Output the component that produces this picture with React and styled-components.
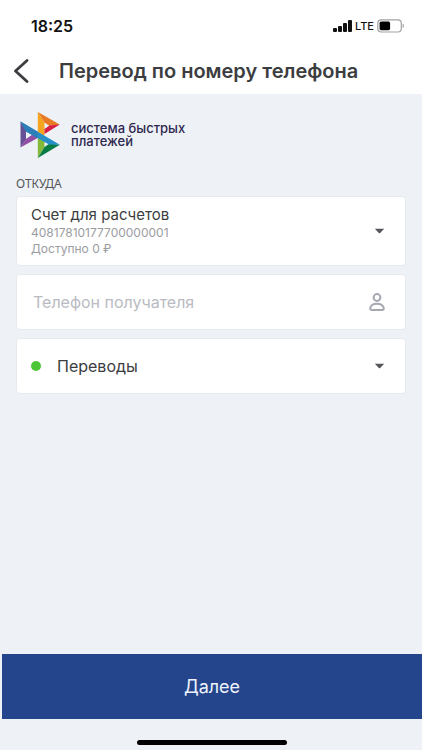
import React, { useState } from 'react'
import styled, { createGlobalStyle } from 'styled-components'

const GlobalStyle = createGlobalStyle`
  * {
    box-sizing: border-box;
  }

  body {
    margin: 0;
    background: #eef2f6;
    font-family: Inter, 'Liberation Sans', sans-serif;
    color: #3c3d40;
  }

  button,
  input,
  select {
    font-family: inherit;
  }
`

const Screen = styled.div`
  min-height: 100vh;
  display: flex;
  flex-direction: column;
`

const StatusBar = styled.div`
  display: flex;
  align-items: center;
  justify-content: space-between;
  height: 48px;
  padding: 4px 17px 0 31px;
  background: #fff;
  color: #111;
`

const Clock = styled.span`
  font-size: 16px;
  font-weight: 600;
`

const StatusIcons = styled.div`
  display: flex;
  align-items: center;
  gap: 3px;
  font-size: 11px;
  font-weight: 500;
`

const Header = styled.header`
  display: flex;
  align-items: center;
  gap: 30px;
  height: 46px;
  padding: 0 13px;
  background: #fff;
`

const BackButton = styled.button`
  display: flex;
  padding: 0;
  border: none;
  background: none;
  color: #3c3d40;
  cursor: pointer;
`

const Title = styled.h1`
  margin: 0;
  font-size: 20px;
  font-weight: 600;
  line-height: 24px;
  white-space: nowrap;
`

const Content = styled.main`
  flex: 1;
  padding: 18px 16px;
`

const Brand = styled.div`
  display: flex;
  align-items: center;
  gap: 10px;
  padding-left: 4px;
  color: #2f2850;
`

const BrandName = styled.p`
  margin: 0;
  font-size: 13px;
  font-weight: 500;
  line-height: 13px;
`

const SectionTitle = styled.h2`
  margin: 18px 0 4px;
  font-family: 'Noto Sans', sans-serif;
  font-size: 12px;
  font-weight: 400;
  line-height: 16px;
  color: #55565a;
`

const Fields = styled.form`
  display: flex;
  flex-direction: column;
  gap: 8px;
`

const Card = styled.label`
  display: flex;
  align-items: center;
  min-height: ${(props) => (props.$tall ? '70px' : '56px')};
  padding: 0 20px 0 ${(props) => (props.$input ? '16px' : '14px')};
  border: 1px solid #e6e9ee;
  border-radius: 4px;
  background: #fff;
`

const CardBody = styled.span`
  flex: 1;
  display: flex;
  flex-direction: column;
`

const Select = styled.select`
  appearance: none;
  flex: 1;
  width: 100%;
  padding: 0;
  border: none;
  outline: none;
  background: none;
  font-size: ${(props) => (props.$compact ? '15px' : '16px')};
  line-height: 20px;
  color: #3c3d40;
`

const Details = styled.span`
  font-size: 12px;
  line-height: 16px;
  color: #9b9c9f;
`

const Input = styled.input`
  flex: 1;
  min-width: 0;
  padding: 0;
  border: none;
  outline: none;
  background: none;
  font-size: 16px;
  line-height: 20px;
  color: #3c3d40;

  &::placeholder {
    color: #b9bbc2;
    opacity: 1;
  }
`

const ContactsButton = styled.button`
  display: flex;
  padding: 0;
  border: none;
  background: none;
  color: #a5a8b1;
  cursor: pointer;
`

const Dot = styled.span`
  width: 10px;
  height: 10px;
  margin-right: 16px;
  border-radius: 50%;
  background: #4cc636;
`

const Footer = styled.footer`
  display: flex;
  flex-direction: column;
  align-items: center;
  padding: 0 0 5px 2px;
`

const NextButton = styled.button`
  width: 100%;
  height: 65px;
  margin-bottom: 21px;
  border: none;
  background: #24458c;
  color: #edf2fc;
  font-size: 18px;
  cursor: pointer;
`

const HomeIndicator = styled.div`
  width: 150px;
  height: 5px;
  border-radius: 3px;
  background: #000;
`

const SignalIcon = () => (
  <svg width="19" height="12" viewBox="0 0 19 12" fill="currentColor">
    <rect x="0" y="8" width="4" height="4" rx="1" />
    <rect x="5" y="6" width="4" height="6" rx="1" />
    <rect x="10" y="3" width="4" height="9" rx="1" />
    <rect x="15" y="0" width="4" height="12" rx="1" />
  </svg>
)

const BatteryIcon = () => (
  <svg width="28" height="14" viewBox="0 0 28 14">
    <rect x="0.8" y="0.8" width="23.5" height="12.2" rx="3.4" fill="none" stroke="#a3a3a3" strokeWidth="1.2" />
    <rect x="2.6" y="2.6" width="10.5" height="8.6" rx="1.6" fill="#000" />
    <path d="M25.7 4.8c1.6.7 1.6 3.5 0 4.2z" fill="#8f8f8f" />
  </svg>
)

const BackIcon = () => (
  <svg width="16" height="24" viewBox="0 0 16 24" fill="none" stroke="currentColor" strokeWidth="2.8">
    <path d="M14 1.5L2.5 12L14 22.5" strokeLinecap="round" strokeLinejoin="round" />
  </svg>
)

const BrandLogo = () => (
  <svg width="41" height="46" viewBox="0 0 40 46">
    <path d="M0 9.5L5.5 18V27.500L0 35.500z" fill="#665196" />
    <path d="M0 35.500L5.500 27L12 22.500L19 25z" fill="#9250a5" />
    <path d="M17.300 0L24 10.500V24L17.300 20z" fill="#f5a51f" />
    <path d="M17.300 0L39.300 12.500L29 14L24 10.500z" fill="#e87925" />
    <path d="M39.300 12.500L24 21.900V17L29 13.500z" fill="#d61f43" />
    <path d="M17.300 24L24 28V35L17.300 46z" fill="#83ba3b" />
    <path d="M39.300 32.800L17.300 46L24 35L29 31.500z" fill="#087c45" />
    <path d="M0 9.500L39.300 32.800L28.500 32.500L5.500 19.500z" fill="#268fc8" />
    <path d="M0 9.500L17.300 19.800V26.200L5.500 19.500z" fill="#2c7fb9" />
  </svg>
)

const Caret = () => (
  <svg width="11" height="6" viewBox="0 0 11 6">
    <path d="M.8.7H10.2L6.2 5Q5.5 5.7 4.8 5z" fill="#55565a" />
  </svg>
)

const PersonIcon = () => (
  <svg width="16" height="20" viewBox="0 0 16 20" fill="none" stroke="currentColor" strokeWidth="2">
    <circle cx="8" cy="5.500" r="3.400" />
    <path d="M3 18h10c1.300 0 1.800-.6 1.800-1.400C14.800 13.700 12 11.800 8 11.800S1.200 13.700 1.200 16.600c0 .8.5 1.400 1.800 1.400z" />
  </svg>
)

const App = () => {
  const [phone, setPhone] = useState('')

  return (
    <>
      <GlobalStyle />
      <Screen>
        <StatusBar>
          <Clock>18:25</Clock>
          <StatusIcons>
            <SignalIcon />
            <span>LTE</span>
            <BatteryIcon />
          </StatusIcons>
        </StatusBar>

        <Header>
          <BackButton type="button" aria-label="Назад">
            <BackIcon />
          </BackButton>
          <Title>Перевод по номеру телефона</Title>
        </Header>

        <Content>
          <Brand>
            <BrandLogo />
            <BrandName>
              система быстрых
              <br />
              платежей
            </BrandName>
          </Brand>

          <SectionTitle>ОТКУДА</SectionTitle>

          <Fields id="transfer" onSubmit={(e) => e.preventDefault()}>
            <Card $tall>
              <CardBody>
                <Select $compact>
                  <option>Счет для расчетов</option>
                </Select>
                <Details>40817810177700000001</Details>
                <Details>Доступно 0 ₽</Details>
              </CardBody>
              <Caret />
            </Card>

            <Card $input>
              <Input
                type="tel"
                aria-label="Телефон получателя"
                placeholder="Телефон получателя"
                value={phone}
                onChange={(e) => setPhone(e.target.value)}
              />
              <ContactsButton type="button" aria-label="Контакты">
                <PersonIcon />
              </ContactsButton>
            </Card>

            <Card>
              <Dot />
              <Select aria-label="Категория">
                <option>Переводы</option>
              </Select>
              <Caret />
            </Card>
          </Fields>
        </Content>

        <Footer>
          <NextButton type="submit" form="transfer">
            Далее
          </NextButton>
          <HomeIndicator />
        </Footer>
      </Screen>
    </>
  )
}

export default App
